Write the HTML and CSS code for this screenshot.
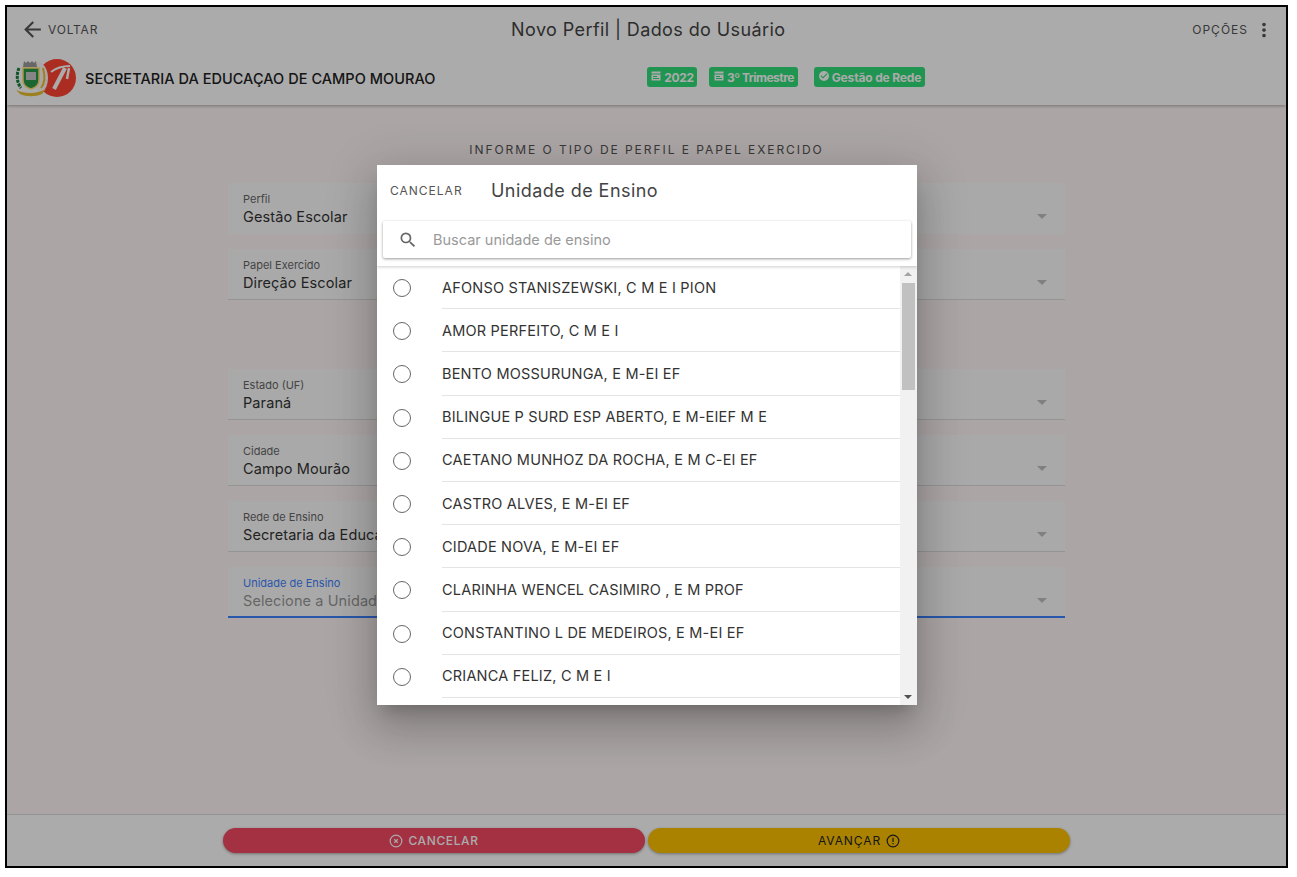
FILE: index.html
```html
<!DOCTYPE html>
<html lang="pt-BR">
<head>
  <meta charset="UTF-8" />
  <meta name="viewport" content="width=device-width, initial-scale=1.0"/>
  <title>Novo Perfil | Dados do Usuário</title>
  <link rel="stylesheet" href="styles.css">
</head>
<body>
  <div class="frame">
    <header class="topbar">
      <div class="topbar-row">
        <a class="back">
          <svg class="back-icon" viewBox="0 0 24 24"><path d="M20 11H7.83l5.59-5.59L12 4l-8 8 8 8 1.41-1.41L7.83 13H20v-2z"/></svg>
          VOLTAR
        </a>
        <h1 class="page-title">Novo Perfil | Dados do Usuário</h1>
        <a class="options">
          OPÇÕES
          <svg class="options-icon" viewBox="0 0 24 24"><path d="M12 8c1.1 0 2-.9 2-2s-.9-2-2-2-2 .9-2 2 .9 2 2 2zm0 2c-1.1 0-2 .9-2 2s.9 2 2 2 2-.9 2-2-.9-2-2-2zm0 6c-1.1 0-2 .9-2 2s.9 2 2 2 2-.9 2-2-.9-2-2-2z"/></svg>
        </a>
      </div>
      <div class="org-row">
        <div class="org">
          <svg class="org-logo" viewBox="0 0 62 38">
            <circle cx="42" cy="19" r="19" fill="#ff4434"/>
            <path d="M27 4c4 4 6 9 6 15s-2 11-6 15l-5 1V3z" fill="#fff6f6"/>
            <path d="M36 13c5-4 12-6 19-6" fill="none" stroke="#fff" stroke-width="2"/>
            <path d="M50 9L39 30" fill="none" stroke="#fff" stroke-width="4"/>
            <path d="M54 9l-2 11" fill="none" stroke="#fff" stroke-width="2.5"/>
            <path d="M9 2l2 2 2-2 2 2 2-2 2 2 2-2 1 6H8z" fill="#9a9a9a"/>
            <path d="M8 9h16v12c0 5-4 8-8 9-4-1-8-4-8-9z" fill="#2a9a4a" stroke="#ffe070" stroke-width="1.5"/>
            <rect x="11" y="13" width="10" height="8" fill="#c8c8c8"/>
            <path d="M4 9c-3 7-2 15 2 20" fill="none" stroke="#14803a" stroke-width="3" stroke-dasharray="3 1"/>
            <path d="M28 9c2 7 2 15-2 20" fill="none" stroke="#e8c030" stroke-width="2"/>
            <path d="M1 31c9 4 21 4 30-1l-4 5c-6 3-16 3-22 0z" fill="#e8c030"/>
          </svg>
          <span class="org-name">SECRETARIA DA EDUCAÇAO DE CAMPO MOURAO</span>
        </div>
        <div class="tags">
          <span class="tag tag-year">
            <svg class="tag-icon" viewBox="0 0 24 24"><path d="M3 3h18v4H3zM3 9h18v12H3zm3 3v2h8v-2zm0 4v2h12v-2z" fill-rule="evenodd"/></svg>
            2022
          </span>
          <span class="tag tag-term">
            <svg class="tag-icon" viewBox="0 0 24 24"><path d="M3 3h18v4H3zM3 9h18v12H3zm3 3v2h8v-2zm0 4v2h12v-2z" fill-rule="evenodd"/></svg>
            3º Trimestre
          </span>
          <span class="tag tag-network">
            <svg class="tag-icon" viewBox="0 0 24 24"><path d="M12 2a10 10 0 1 0 0 20 10 10 0 0 0 0-20zm-2 15l-5-5 1.4-1.4L10 14.2l7.6-7.6L19 8z"/></svg>
            Gestão de Rede
          </span>
        </div>
      </div>
    </header>

    <main class="content">
      <p class="section-title">INFORME O TIPO DE PERFIL E PAPEL EXERCIDO</p>
      <div class="field-group first">
        <div class="field no-line"><label>Perfil</label><span class="value">Gestão Escolar</span><i class="caret"></i></div>
        <div class="field"><label>Papel Exercido</label><span class="value">Direção Escolar</span><i class="caret"></i></div>
      </div>
      <div class="field-group second">
        <div class="field"><label>Estado (UF)</label><span class="value">Paraná</span><i class="caret"></i></div>
        <div class="field"><label>Cidade</label><span class="value">Campo Mourão</span><i class="caret"></i></div>
        <div class="field"><label>Rede de Ensino</label><span class="value">Secretaria da Educação</span><i class="caret"></i></div>
        <div class="field active"><label>Unidade de Ensino</label><span class="value">Selecione a Unidade de Ensino</span><i class="caret"></i></div>
      </div>
    </main>

    <footer class="footer">
      <button class="btn btn-cancel">
        <svg class="btn-icon" viewBox="0 0 24 24"><circle cx="12" cy="12" r="10" fill="none" stroke="currentColor" stroke-width="2"/><path d="M9 9l6 6M15 9l-6 6" stroke="currentColor" stroke-width="2"/></svg>
        CANCELAR
      </button>
      <button class="btn btn-next">
        AVANÇAR
        <svg class="btn-icon" viewBox="0 0 24 24"><circle cx="12" cy="12" r="10" fill="none" stroke="currentColor" stroke-width="2"/><path d="M11 6.5h2v7h-2zM11 15.5h2v2h-2z" fill="currentColor"/></svg>
      </button>
    </footer>

    <!-- modal -->
    <div class="backdrop"></div>
    <div class="dialog">
      <div class="dialog-head">
        <div class="dialog-title-row">
          <a class="dialog-cancel">CANCELAR</a>
          <h2 class="dialog-title">Unidade de Ensino</h2>
        </div>
        <div class="search">
          <svg class="search-icon" viewBox="0 0 24 24"><path d="M15.5 14h-.79l-.28-.27A6.471 6.471 0 0 0 16 9.5 6.5 6.5 0 1 0 9.5 16c1.61 0 3.09-.59 4.23-1.57l.27.28v.79l5 4.99L20.49 19l-4.99-5zm-6 0C7.01 14 5 11.99 5 9.5S7.01 5 9.5 5 14 7.01 14 9.5 11.99 14 9.5 14z"/></svg>
          <span class="search-text">Buscar unidade de ensino</span>
        </div>
      </div>
      <div class="dialog-body">
        <ul class="list">
          <li class="item"><span class="radio"></span><span class="item-text">AFONSO STANISZEWSKI, C M E I PION</span></li>
          <li class="item"><span class="radio"></span><span class="item-text">AMOR PERFEITO, C M E I</span></li>
          <li class="item"><span class="radio"></span><span class="item-text">BENTO MOSSURUNGA, E M-EI EF</span></li>
          <li class="item"><span class="radio"></span><span class="item-text">BILINGUE P SURD ESP ABERTO, E M-EIEF M E</span></li>
          <li class="item"><span class="radio"></span><span class="item-text">CAETANO MUNHOZ DA ROCHA, E M C-EI EF</span></li>
          <li class="item"><span class="radio"></span><span class="item-text">CASTRO ALVES, E M-EI EF</span></li>
          <li class="item"><span class="radio"></span><span class="item-text">CIDADE NOVA, E M-EI EF</span></li>
          <li class="item"><span class="radio"></span><span class="item-text">CLARINHA WENCEL CASIMIRO , E M PROF</span></li>
          <li class="item"><span class="radio"></span><span class="item-text">CONSTANTINO L DE MEDEIROS, E M-EI EF</span></li>
          <li class="item"><span class="radio"></span><span class="item-text">CRIANCA FELIZ, C M E I</span></li>
        </ul>
        <div class="scrollbar">
          <i class="scroll-up"></i>
          <div class="scroll-thumb"></div>
          <i class="scroll-down"></i>
        </div>
      </div>
    </div>
  </div>
</body>
</html>
```

FILE: styles.css
```css
* {
  box-sizing: border-box;
}

body {
  margin: 0;
  height: 877px;
  padding: 5px 9px 9px 5px;
  background: #fff;
  font-family: Inter, "Noto Sans", sans-serif;
  color: #333;
  overflow: hidden;
}

.frame {
  position: relative;
  height: 100%;
  display: flex;
  flex-direction: column;
  border: 2px solid #000;
  background: #fff6f6;
  overflow: hidden;
}

/* Top bar */
.topbar {
  height: 98px;
  background: #fff;
  box-shadow: 0 1px 3px rgba(0, 0, 0, 0.3);
}

.topbar-row {
  height: 45px;
  padding: 0 11px 0 13px;
  display: flex;
  align-items: center;
  justify-content: space-between;
}

.back,
.options {
  display: flex;
  align-items: center;
  font-size: 12px;
  letter-spacing: 0.8px;
  color: #555;
}

.options {
  letter-spacing: 1px;
}

.back-icon {
  width: 25px;
  height: 25px;
  margin-right: 3px;
  fill: #555;
}

.options-icon {
  width: 22px;
  height: 22px;
  margin-left: 5px;
  fill: #555;
}

.page-title {
  margin: 0 0 0 6px;
  font-size: 18px;
  font-weight: 400;
  letter-spacing: 0.4px;
  color: #444;
}

.org-row {
  position: relative;
  height: 52px;
  display: flex;
  align-items: center;
}

.org {
  display: flex;
  align-items: center;
  padding-left: 8px;
}

.org-logo {
  width: 62px;
  height: 38px;
  margin-right: 8px;
}

.org-name {
  font-size: 14.5px;
  font-weight: 500;
  letter-spacing: 0.05px;
  color: #222;
}

.tags {
  position: absolute;
  left: 640px;
  top: 15px;
  display: flex;
  gap: 12px;
}

.tag {
  height: 20px;
  display: flex;
  align-items: center;
  justify-content: center;
  gap: 2px;
  border-radius: 3px;
  background: #31dd7a;
  color: #fff;
  font-size: 12px;
  font-weight: 700;
  letter-spacing: -0.3px;
}

.tag-year {
  width: 50px;
}

.tag-term {
  width: 89px;
  letter-spacing: -0.5px;
}

.tag-network {
  width: 111px;
  margin-left: 4px;
  letter-spacing: -0.15px;
}

.tag-icon {
  width: 12px;
  height: 12px;
  margin-top: -3px;
  fill: #fff;
}

/* Form */
.content {
  flex: 1;
  display: flex;
  flex-direction: column;
  align-items: center;
}

.section-title {
  margin: 37px 0 0;
  font-size: 12px;
  line-height: 16px;
  letter-spacing: 1.95px;
  color: #555;
}

.field-group {
  width: 837px;
  display: flex;
  flex-direction: column;
  gap: 15px;
}

.field-group.first {
  margin-top: 25px;
}

.field-group.second {
  margin-top: 69px;
}

.field {
  position: relative;
  height: 51px;
  padding: 10px 15px 0;
  background: #fdfdfd;
  border-bottom: 1px solid #ddd;
}

.field.no-line {
  border-bottom: none;
}

.field label {
  display: block;
  font-size: 11px;
  line-height: 13px;
  color: #666;
}

.field .value {
  display: block;
  margin-top: 1px;
  font-size: 14.5px;
  line-height: 20px;
  letter-spacing: 0.1px;
  color: #333;
}

.caret {
  position: absolute;
  right: 18px;
  top: 31px;
  border-left: 5px solid transparent;
  border-right: 5px solid transparent;
  border-top: 5px solid #bfbfbf;
}

.field.active {
  border-bottom: 2px solid #3d82ff;
}

.field.active label {
  color: #3d82ff;
}

.field.active .value {
  color: #999;
}

/* Footer */
.footer {
  height: 52px;
  background: #fff;
  border-top: 1px solid #ddd;
  display: flex;
  justify-content: center;
  gap: 3px;
  padding-top: 13px;
}

.btn {
  width: 422px;
  height: 25px;
  display: flex;
  align-items: center;
  justify-content: center;
  gap: 5px;
  border: none;
  border-radius: 13px;
  font-family: inherit;
  font-size: 12px;
  letter-spacing: 0.6px;
  box-shadow: 0 1px 3px rgba(0, 0, 0, 0.35);
}

.btn-cancel {
  background: #f34962;
  color: #fff;
  font-weight: 500;
}

.btn-next {
  background: #ffc200;
  color: #222;
  font-weight: 400;
  letter-spacing: 0.9px;
}

.btn-icon {
  width: 14px;
  height: 14px;
}

/* Modal */
.backdrop {
  position: absolute;
  inset: 0;
  background: rgba(0, 0, 0, 0.33);
}

.dialog {
  position: absolute;
  left: 370px;
  top: 158px;
  width: 540px;
  height: 540px;
  display: flex;
  flex-direction: column;
  background: #fff;
  box-shadow: 0 11px 15px -7px rgba(0, 0, 0, 0.2), 0 24px 38px 3px rgba(0, 0, 0, 0.14), 0 9px 46px 8px rgba(0, 0, 0, 0.12);
  overflow: hidden;
}

.dialog-head {
  position: relative;
  height: 101px;
  flex-shrink: 0;
  box-shadow: 0 1px 3px rgba(0, 0, 0, 0.2);
  z-index: 1;
  background: #fff;
}

.dialog-title-row {
  height: 51px;
  padding: 0 13px;
  display: flex;
  align-items: center;
}

.dialog-cancel {
  width: 101px;
  font-size: 12px;
  letter-spacing: 1px;
  color: #555;
}

.dialog-title {
  margin: 0;
  font-size: 18px;
  font-weight: 400;
  letter-spacing: 0.45px;
  color: #444;
}

.search {
  margin: 5px 6px 0;
  height: 37px;
  padding-left: 15px;
  display: flex;
  align-items: center;
  border-radius: 2px;
  box-shadow: 0 1px 3px rgba(0, 0, 0, 0.4);
}

.search-icon {
  width: 20px;
  height: 20px;
  fill: #666;
  margin-right: 15px;
}

.search-text {
  font-size: 14.5px;
  color: #999;
}

.dialog-body {
  flex: 1;
  min-height: 0;
  display: flex;
}

.list {
  flex: 1;
  margin: 0;
  padding: 0;
  list-style: none;
  overflow: hidden;
}

.item {
  height: 43.2px;
  display: flex;
  align-items: stretch;
}

.radio {
  flex: none;
  width: 18px;
  height: 18px;
  margin: 13px 31px 0 16px;
  border: 1.5px solid #666;
  border-radius: 50%;
}

.item-text {
  flex: 1;
  display: flex;
  align-items: center;
  font-size: 14.5px;
  letter-spacing: 0.2px;
  color: #333;
  border-bottom: 1px solid #e4e4e4;
}

.scrollbar {
  width: 17px;
  flex: none;
  position: relative;
  background: #f1f1f1;
}

.scroll-thumb {
  margin: 17px 2px 0;
  height: 107px;
  background: #c1c1c1;
}

.scroll-up,
.scroll-down {
  position: absolute;
  left: 4px;
  border-left: 4px solid transparent;
  border-right: 4px solid transparent;
}

.scroll-up {
  top: 6px;
  border-bottom: 4px solid #a3a3a3;
}

.scroll-down {
  bottom: 6px;
  border-top: 4px solid #505050;
}
```
